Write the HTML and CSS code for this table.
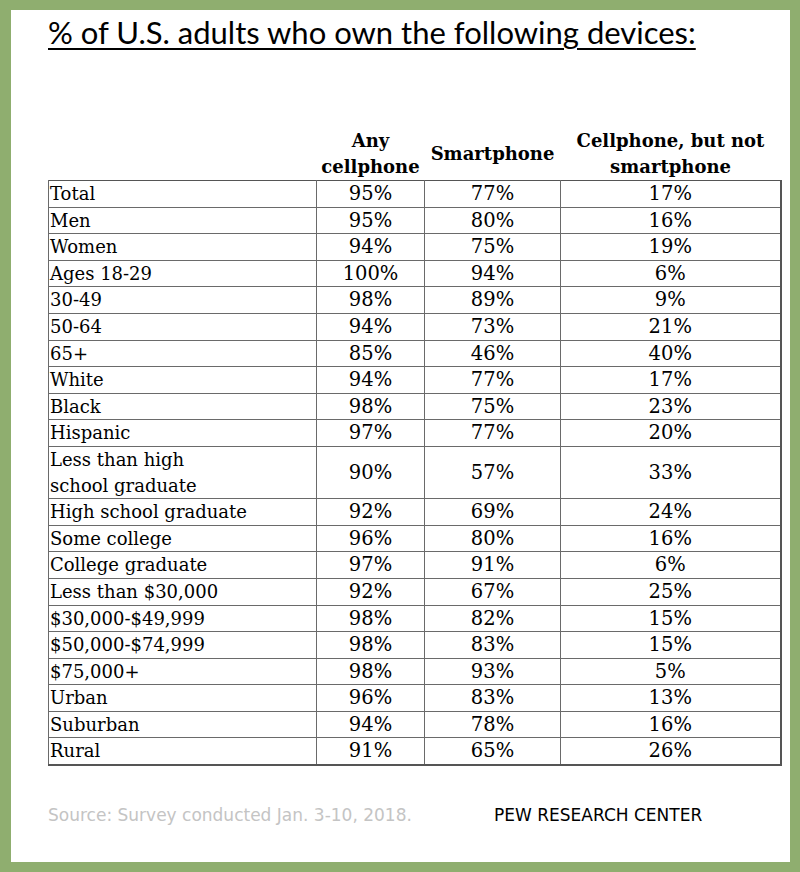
FILE: index.html
```html
<!DOCTYPE html>
<html lang="en">
<head>
<meta charset="utf-8">
<title>% of U.S. adults who own the following devices</title>
<link rel="stylesheet" href="styles.css">
</head>
<body>
<div class="frame">
  <h1 class="title">% of U.S. adults who own the following devices:</h1>
  <table class="data">
    <colgroup>
      <col class="c-label">
      <col class="c-any">
      <col class="c-smart">
      <col class="c-cell">
    </colgroup>
    <thead>
      <tr>
        <th class="blank"></th>
        <th>Any<br>cellphone</th>
        <th>Smartphone</th>
        <th>Cellphone, but not<br>smartphone</th>
      </tr>
    </thead>
    <tbody>
      <tr><td>Total</td><td>95%</td><td>77%</td><td>17%</td></tr>
      <tr><td>Men</td><td>95%</td><td>80%</td><td>16%</td></tr>
      <tr><td>Women</td><td>94%</td><td>75%</td><td>19%</td></tr>
      <tr><td>Ages 18-29</td><td>100%</td><td>94%</td><td>6%</td></tr>
      <tr><td>30-49</td><td>98%</td><td>89%</td><td>9%</td></tr>
      <tr><td>50-64</td><td>94%</td><td>73%</td><td>21%</td></tr>
      <tr><td>65+</td><td>85%</td><td>46%</td><td>40%</td></tr>
      <tr><td>White</td><td>94%</td><td>77%</td><td>17%</td></tr>
      <tr><td>Black</td><td>98%</td><td>75%</td><td>23%</td></tr>
      <tr><td>Hispanic</td><td>97%</td><td>77%</td><td>20%</td></tr>
      <tr><td>Less than high<br>school graduate</td><td>90%</td><td>57%</td><td>33%</td></tr>
      <tr><td>High school graduate</td><td>92%</td><td>69%</td><td>24%</td></tr>
      <tr><td>Some college</td><td>96%</td><td>80%</td><td>16%</td></tr>
      <tr><td>College graduate</td><td>97%</td><td>91%</td><td>6%</td></tr>
      <tr><td>Less than $30,000</td><td>92%</td><td>67%</td><td>25%</td></tr>
      <tr><td>$30,000-$49,999</td><td>98%</td><td>82%</td><td>15%</td></tr>
      <tr><td>$50,000-$74,999</td><td>98%</td><td>83%</td><td>15%</td></tr>
      <tr><td>$75,000+</td><td>98%</td><td>93%</td><td>5%</td></tr>
      <tr><td>Urban</td><td>96%</td><td>83%</td><td>13%</td></tr>
      <tr><td>Suburban</td><td>94%</td><td>78%</td><td>16%</td></tr>
      <tr><td>Rural</td><td>91%</td><td>65%</td><td>26%</td></tr>
    </tbody>
  </table>
  <div class="footer">
    <span class="source">Source: Survey conducted Jan. 3-10, 2018.</span>
    <span class="brand">PEW RESEARCH CENTER</span>
  </div>
</div>
</body>
</html>
```

FILE: styles.css
```css
html, body {
  margin: 0;
  padding: 0;
  background: #ffffff;
}

.frame {
  box-sizing: border-box;
  width: 800px;
  height: 872px;
  border-style: solid;
  border-color: #8fae6f;
  border-width: 10px 10px 10px 11px;
  background: #ffffff;
  padding: 0 0 0 37px;
}

.title {
  margin: 0;
  padding-top: 4px;
  font-family: Lato, "Open Sans", sans-serif;
  font-weight: 400;
  font-size: 31px;
  line-height: 36px;
  color: #000;
  text-decoration: underline;
  text-decoration-thickness: 2px;
  text-underline-offset: 4px;
}

.data {
  margin-top: 78px;
  border-collapse: collapse;
  width: 732px;
  table-layout: fixed;
  font-family: "DejaVu Serif", "Liberation Serif", serif;
  font-size: 18px;
  color: #000;
}

.c-label { width: 268px; }
.c-any { width: 108px; }
.c-smart { width: 136px; }
.c-cell { width: 220px; }

.data th {
  font-weight: 700;
  font-size: 18px;
  line-height: 26px;
  text-align: center;
  vertical-align: middle;
  padding: 0;
  border: none;
}

.data thead th:nth-child(2) {
  vertical-align: bottom;
}

.data td {
  border: 1px solid #6a6a6a;
  padding: 0 2px;
  line-height: 25.6px;
  text-align: center;
  white-space: nowrap;
  font-size: 19.5px;
}

.data td:first-child {
  text-align: left;
  padding-left: 1px;
  font-size: 18px;
}

.data tbody tr:first-child td {
  border-top: 1px solid #555;
}

.data tbody td:last-child {
  border-right: 2px solid #555;
}

.data tbody tr:last-child td {
  border-bottom: 2px solid #555;
}

.footer {
  display: flex;
  margin-top: 39px;
  font-family: "DejaVu Sans", Verdana, sans-serif;
  font-size: 17px;
  line-height: 20px;
}

.source {
  width: 446px;
  color: #c4c4c4;
}

.brand {
  color: #000;
}
```
